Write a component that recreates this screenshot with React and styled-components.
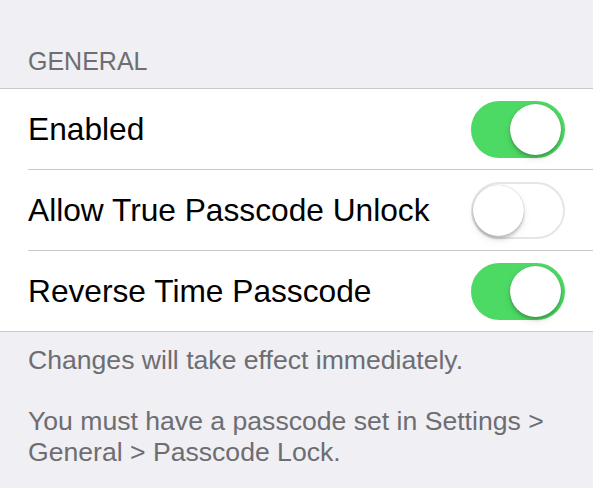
import { useState } from "react";
import styled, { createGlobalStyle } from "styled-components";

const GlobalStyle = createGlobalStyle`
  html, body {
    margin: 0;
    padding: 0;
    background: #efeff4;
  }
  body {
    font-family: "Liberation Sans", Arial, sans-serif;
    -webkit-font-smoothing: antialiased;
  }
`;

const Page = styled.div`
  width: 593px;
  height: 488px;
  overflow: hidden;
  background: #efeff4;
  padding-top: 46px;
  box-sizing: border-box;
`;

const SectionHeader = styled.div`
  padding: 0 28px;
  height: 42px;
  font-size: 25px;
  color: #6d6d72;
  line-height: 30px;
`;

const Group = styled.div`
  background: #fff;
  border-top: 1px solid #c8c7cc;
  border-bottom: 1px solid #c8c7cc;
`;

const Row = styled.div`
  display: flex;
  align-items: center;
  justify-content: space-between;
  height: 80px;
  margin-left: 28px;
  padding-right: 28px;
  border-bottom: ${({ $last }) => ($last ? "none" : "1px solid #c8c7cc")};
  box-sizing: content-box;
`;

const Label = styled.span`
  font-size: 31.7px;
  color: #000;
`;

const Track = styled.button`
  position: relative;
  width: 94px;
  height: 57px;
  padding: 0;
  border-radius: 29px;
  cursor: pointer;
  box-sizing: border-box;
  border: 2px solid ${({ $on }) => ($on ? "#4cd964" : "#e5e5ea")};
  background: ${({ $on }) => ($on ? "#4cd964" : "#fff")};
  outline: none;
`;

const Knob = styled.span`
  position: absolute;
  top: 1px;
  left: ${({ $on }) => ($on ? "37px" : "0px")};
  width: 51px;
  height: 51px;
  border-radius: 50%;
  background: #fff;
  box-shadow: 0 3px 3px rgba(0, 0, 0, 0.18), 0 0 1px rgba(0, 0, 0, 0.35),
    0 4px 8px rgba(0, 0, 0, 0.08);
`;

const Footer = styled.div`
  padding: 13px 28px 0;
  font-size: 26.6px;
  line-height: 31px;
  color: #6d6d72;
`;

const Note = styled.p`
  margin: 0 0 30px;
`;

function Switch({ on, onToggle }) {
  return (
    <Track $on={on} onClick={onToggle}>
      <Knob $on={on} />
    </Track>
  );
}

export default function App() {
  const [settings, setSettings] = useState([
    { label: "Enabled", on: true },
    { label: "Allow True Passcode Unlock", on: false },
    { label: "Reverse Time Passcode", on: true },
  ]);

  const toggle = (i) =>
    setSettings((s) => s.map((it, j) => (j === i ? { ...it, on: !it.on } : it)));

  return (
    <Page>
      <GlobalStyle />
      <SectionHeader>GENERAL</SectionHeader>
      <Group>
        {settings.map((it, i) => (
          <Row key={it.label} $last={i === settings.length - 1}>
            <Label>{it.label}</Label>
            <Switch on={it.on} onToggle={() => toggle(i)} />
          </Row>
        ))}
      </Group>
      <Footer>
        <Note>Changes will take effect immediately.</Note>
        <Note>
          You must have a passcode set in Settings &gt;
          <br />
          General &gt; Passcode Lock.
        </Note>
      </Footer>
    </Page>
  );
}
